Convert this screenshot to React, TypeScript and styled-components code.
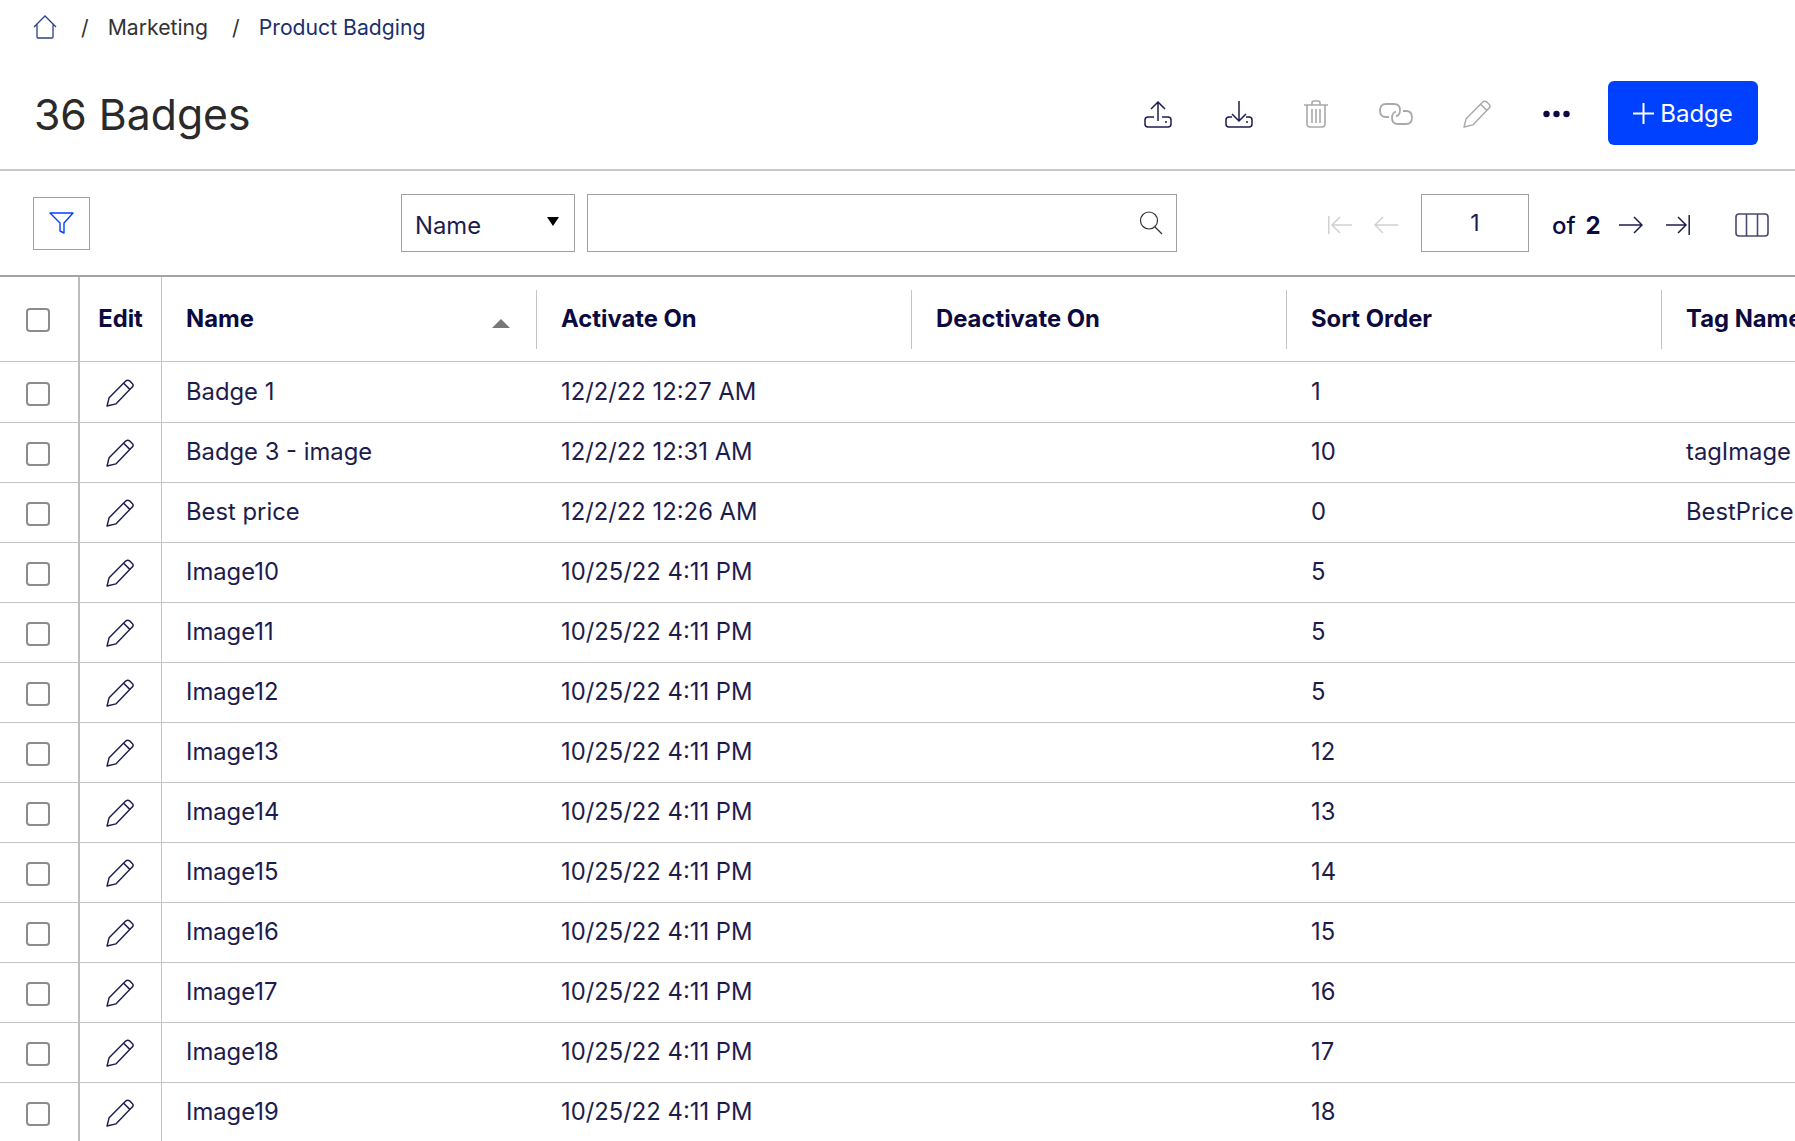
import React from "react";
import styled, { createGlobalStyle } from "styled-components";

const GlobalStyle = createGlobalStyle`
  html, body {
    margin: 0;
    padding: 0;
    background: #fff;
    overflow: hidden;
    font-family: Inter, "Liberation Sans", sans-serif;
  }
`;

const Page = styled.div`
  width: 1795px;
  height: 1141px;
  overflow: hidden;
  color: #1e1c4d;
`;

// Breadcrumb
const Crumbs = styled.nav`
  display: flex;
  align-items: center;
  height: 54px;
  padding-left: 33px;
  font-size: 21.2px;
`;

const Sep = styled.span`
  margin: 0 19px 0 24px;
  color: #333;
`;

const Crumb = styled.span<{ $current?: boolean }>`
  color: ${(p) => (p.$current ? "#1b2f6e" : "#333")};
`;

// Title bar
const TitleBar = styled.header`
  display: flex;
  align-items: center;
  justify-content: space-between;
  height: 113px;
  padding: 2px 37px 0 34px;
  border-bottom: 2px solid #c9c9c9;
`;

const Title = styled.h1`
  margin: 4px 0 0;
  font-size: 42.7px;
  font-weight: 400;
  color: #2a2a2a;
`;

const Actions = styled.div`
  display: flex;
  align-items: center;
  gap: 38px;
`;

const IconGroup = styled.div`
  display: flex;
  align-items: center;
`;

// Holds one toolbar icon; the spacing before the next one varies a little
const IconSlot = styled.span<{ $after?: number }>`
  display: flex;
  margin-top: 3px;
  margin-right: ${(p) => p.$after ?? 0}px;
`;

const PrimaryButton = styled.button`
  display: flex;
  align-items: center;
  justify-content: center;
  gap: 6px;
  width: 150px;
  height: 64px;
  padding: 2px 0 0;
  border: 0;
  border-radius: 6px;
  background: #0041ff;
  color: #fff;
  font: 400 24px Inter, sans-serif;
`;

// Search and paging toolbar
const Toolbar = styled.div`
  display: flex;
  align-items: center;
  height: 106px;
  padding: 0 0 0 33px;
  border-bottom: 2px solid #a3a3a3;
  box-sizing: border-box;
  & > * {
    flex: none;
  }
`;

const FilterBox = styled.div`
  display: flex;
  align-items: center;
  justify-content: center;
  width: 57px;
  height: 53px;
  margin-right: 311px;
  border: 1px solid #a0a0a0;
  box-sizing: border-box;
`;

const Select = styled.div`
  display: flex;
  align-items: center;
  justify-content: space-between;
  width: 174px;
  height: 58px;
  padding: 5px 15px 0 13px;
  margin-right: 12px;
  border: 1px solid #a0a0a0;
  box-sizing: border-box;
  font-size: 23.8px;
`;

const Caret = styled.span`
  width: 0;
  height: 0;
  margin-bottom: 8px;
  border-left: 6px solid transparent;
  border-right: 6px solid transparent;
  border-top: 9px solid #000;
`;

const SearchBox = styled.div`
  display: flex;
  align-items: center;
  justify-content: flex-end;
  width: 590px;
  height: 58px;
  padding-right: 12px;
  margin-right: 151px;
  border: 1px solid #a0a0a0;
  box-sizing: border-box;
`;

const Pager = styled.div`
  display: flex;
  align-items: center;
  padding-top: 4px;
`;

const PageInput = styled.div`
  display: flex;
  align-items: center;
  justify-content: center;
  width: 108px;
  height: 58px;
  margin: -4px 23px 0;
  border: 1px solid #a0a0a0;
  box-sizing: border-box;
  font-size: 23px;
`;

const PageTotal = styled.span`
  display: flex;
  gap: 10px;
  margin-right: 18px;
  font-size: 24px;
  font-weight: 500;
  color: #0c0a3e;
  b {
    font-weight: 700;
  }
`;

const ColumnsIcon = styled.svg`
  margin-left: 45px;
`;

// Table
const Row = styled.div<{ $height: number }>`
  display: flex;
  height: ${(p) => p.$height}px;
  border-bottom: 1px solid #c4c4c4;
  box-sizing: border-box;
  font-size: 23.8px;
`;

const CheckCell = styled.div<{ $head?: boolean }>`
  display: flex;
  align-items: center;
  justify-content: center;
  flex: none;
  width: 80px;
  padding: ${(p) => (p.$head ? "1px" : "3px")} 3px 0 0;
  border-right: 2px solid #bdbdbd;
  box-sizing: border-box;
`;

const Check = styled.span`
  width: 24px;
  height: 24px;
  border: 2px solid #8c8c8c;
  border-radius: 4px;
  box-sizing: border-box;
`;

const EditCell = styled.div<{ $head?: boolean }>`
  display: flex;
  align-items: center;
  justify-content: center;
  flex: none;
  width: 82px;
  padding: ${(p) => (p.$head ? "0 0 2px" : "1px 1px 0 0")};
  border-right: 1px solid #c4c4c4;
  box-sizing: border-box;
  font-weight: 700;
  color: #0c0a3e;
`;

const Cell = styled.div<{ $w: number }>`
  display: flex;
  align-items: center;
  flex: none;
  width: ${(p) => p.$w}px;
  padding: 0 0 2px 24px;
  box-sizing: border-box;
  white-space: nowrap;
`;

const HeadCell = styled(Cell)<{ $last?: boolean }>`
  justify-content: space-between;
  margin: 13px 0 12px;
  padding: 0 26px 3px 24px;
  border-right: ${(p) => (p.$last ? "0" : "1px solid #c4c4c4")};
  font-weight: 700;
  color: #0c0a3e;
`;

const SortArrow = styled.span`
  width: 0;
  height: 0;
  margin-top: 11px;
  border-left: 9px solid transparent;
  border-right: 9px solid transparent;
  border-bottom: 9px solid #777;
`;

const PagerGap = styled.span<{ $w: number }>`
  width: ${(p) => p.$w}px;
`;

const NAVY = "#1e1c4d";
const GRAY = "#a9a9a9";
const FAINT = "#d0d0d0";

const HomeIcon = () => (
  <svg width="24" height="24" viewBox="0 0 24 24" fill="none" stroke="#2b4380" strokeWidth="1.3">
    <path d="M1 12 L12 1 L23 12 M4 9.5 V22 Q4 23 5 23 H19 Q20 23 20 22 V9.5" />
  </svg>
);

const UploadIcon = () => (
  <svg width="28" height="27" viewBox="0 0 28 27" fill="none" stroke={NAVY} strokeWidth="1.5">
    <path d="M10 16 H4 Q1 16 1 19 V23 Q1 26 4 26 H24 Q27 26 27 23 V19 Q27 16 24 16 H18" />
    <path d="M14 20 V1 M7 8 L14 1 L21 8" />
    <circle cx="22" cy="21" r="1" fill={NAVY} stroke="none" />
  </svg>
);

const DownloadIcon = () => (
  <svg width="28" height="27" viewBox="0 0 28 27" fill="none" stroke={NAVY} strokeWidth="1.5">
    <path d="M7 16 H4 Q1 16 1 19 V23 Q1 26 4 26 H24 Q27 26 27 23 V19 Q27 16 24 16 H21" />
    <path d="M14 20 V0 M7 13 L14 20 L21 13" />
    <circle cx="22" cy="21" r="1" fill={NAVY} stroke="none" />
  </svg>
);

const TrashIcon = () => (
  <svg width="24" height="28" viewBox="0 0 24 28" fill="none" stroke={GRAY} strokeWidth="1.6">
    <path d="M0 5 H24 M8 5 V3 Q8 1 10 1 H14 Q16 1 16 3 V5" />
    <path d="M3 5 V24 Q3 27 6 27 H18 Q21 27 21 24 V5" />
    <path d="M8 9 V23 M12 9 V23 M16 9 V23" />
  </svg>
);

const LinkIcon = () => (
  <svg width="34" height="22" viewBox="0 0 34 22" fill="none" stroke={GRAY} strokeWidth="1.8">
    <path d="M10 14 H7 Q1 14 1 7.5 Q1 1 7 1 H15 Q21 1 21 7 Q21 12 17 13.5" />
    <path d="M24 8 H27 Q33 8 33 14.5 Q33 21 27 21 H19 Q13 21 13 15 Q13 10 17 8.5" />
  </svg>
);

const PencilIcon = ({ color = NAVY, size = 28 }: { color?: string; size?: number }) => (
  <svg width={size} height={size} viewBox="0 0 27 27" fill="none" stroke={color} strokeWidth="1.4" strokeLinejoin="round">
    <path d="M1 26 L3 18 L19 2 Q21 0.5 23 2 L25.5 4.5 Q27 6.5 25 8 L9.5 24 Z" />
    <path d="M17 4 L23 10" />
  </svg>
);

const DotsIcon = () => (
  <svg width="27" height="8" viewBox="0 0 27 8" fill="#0c0a3e">
    <circle cx="3.5" cy="4" r="3.2" />
    <circle cx="13.5" cy="4" r="3.2" />
    <circle cx="23.5" cy="4" r="3.2" />
  </svg>
);

const PlusIcon = () => (
  <svg width="21" height="21" viewBox="0 0 20 20" stroke="#fff" strokeWidth="1.9">
    <path d="M10 0 V20 M0 10 H20" />
  </svg>
);

const FilterIcon = () => (
  <svg width="25" height="22" viewBox="0 0 25 22" fill="none" stroke="#0041ff" strokeWidth="1.4" strokeLinejoin="round">
    <path d="M1 1 H24 L15 11 V21 L11 19 V11 Z" />
  </svg>
);

const SearchIcon = () => (
  <svg width="26" height="26" viewBox="0 0 26 26" fill="none" stroke="#333" strokeWidth="1.2">
    <circle cx="11" cy="10.5" r="8.5" />
    <path d="M17 17 L24 24" />
  </svg>
);

// Arrow pointing left or right, with an optional end stop
const PageArrow = ({ dir, stop, color }: { dir: "left" | "right"; stop?: boolean; color: string }) => (
  <svg width="24" height="22" viewBox="0 0 24 22" fill="none" stroke={color} strokeWidth="1.5">
    {dir === "left" ? (
      <path d={stop ? "M24 11 H4 M12 3 L4 11 L12 19 M0.8 2 V20" : "M24 11 H1 M9 3 L1 11 L9 19"} />
    ) : (
      <path d={stop ? "M0 11 H20 M12 3 L20 11 L12 19 M23.2 1 V21" : "M0 11 H23 M15 3 L23 11 L15 19"} />
    )}
  </svg>
);

const columns = [
  { label: "Activate On", width: 375 },
  { label: "Deactivate On", width: 375 },
  { label: "Sort Order", width: 375 },
  { label: "Tag Name", width: 200 },
];

const badges = [
  { name: "Badge 1", date: "12/2/22 12:27 AM", sort: "1", tag: "" },
  { name: "Badge 3 - image", date: "12/2/22 12:31 AM", sort: "10", tag: "tagImage" },
  { name: "Best price", date: "12/2/22 12:26 AM", sort: "0", tag: "BestPrice" },
  { name: "Image10", date: "10/25/22 4:11 PM", sort: "5", tag: "" },
  { name: "Image11", date: "10/25/22 4:11 PM", sort: "5", tag: "" },
  { name: "Image12", date: "10/25/22 4:11 PM", sort: "5", tag: "" },
  { name: "Image13", date: "10/25/22 4:11 PM", sort: "12", tag: "" },
  { name: "Image14", date: "10/25/22 4:11 PM", sort: "13", tag: "" },
  { name: "Image15", date: "10/25/22 4:11 PM", sort: "14", tag: "" },
  { name: "Image16", date: "10/25/22 4:11 PM", sort: "15", tag: "" },
  { name: "Image17", date: "10/25/22 4:11 PM", sort: "16", tag: "" },
  { name: "Image18", date: "10/25/22 4:11 PM", sort: "17", tag: "" },
  { name: "Image19", date: "10/25/22 4:11 PM", sort: "18", tag: "" },
];

const App: React.FC = () => (
  <Page>
    <GlobalStyle />
    <Crumbs>
      <HomeIcon />
      <Sep>/</Sep>
      <Crumb>Marketing</Crumb>
      <Sep>/</Sep>
      <Crumb $current>Product Badging</Crumb>
    </Crumbs>

    <TitleBar>
      <Title>36 Badges</Title>
      <Actions>
        <IconGroup>
          <IconSlot $after={53}>
            <UploadIcon />
          </IconSlot>
          <IconSlot $after={51}>
            <DownloadIcon />
          </IconSlot>
          <IconSlot $after={51}>
            <TrashIcon />
          </IconSlot>
          <IconSlot $after={50}>
            <LinkIcon />
          </IconSlot>
          <IconSlot $after={52}>
            <PencilIcon color={GRAY} />
          </IconSlot>
          <IconSlot>
            <DotsIcon />
          </IconSlot>
        </IconGroup>
        <PrimaryButton>
          <PlusIcon />
          Badge
        </PrimaryButton>
      </Actions>
    </TitleBar>

    <Toolbar>
      <FilterBox>
        <FilterIcon />
      </FilterBox>
      <Select>
        Name
        <Caret />
      </Select>
      <SearchBox>
        <SearchIcon />
      </SearchBox>
      <Pager>
        <PageArrow dir="left" stop color={FAINT} />
        <PagerGap $w={22} />
        <PageArrow dir="left" color={FAINT} />
        <PageInput>1</PageInput>
        <PageTotal>
          of <b>2</b>
        </PageTotal>
        <PageArrow dir="right" color={NAVY} />
        <PagerGap $w={23} />
        <PageArrow dir="right" stop color={NAVY} />
        <ColumnsIcon width="34" height="24" viewBox="0 0 34 24" fill="none" stroke="#4a4875" strokeWidth="1.6">
          <rect x="1" y="1" width="32" height="22" rx="3" />
          <path d="M11.5 1 V23 M22.5 1 V23" />
        </ColumnsIcon>
      </Pager>
    </Toolbar>

    <Row $height={85}>
      <CheckCell $head>
        <Check />
      </CheckCell>
      <EditCell $head>Edit</EditCell>
      <HeadCell $w={375}>
        Name
        <SortArrow />
      </HeadCell>
      {columns.map((c, i) => (
        <HeadCell key={c.label} $w={c.width} $last={i === columns.length - 1}>
          {c.label}
        </HeadCell>
      ))}
    </Row>

    {badges.map((b, i) => (
      <Row key={b.name} $height={i === 0 ? 61 : 60}>
        <CheckCell>
          <Check />
        </CheckCell>
        <EditCell>
          <PencilIcon />
        </EditCell>
        <Cell $w={375}>{b.name}</Cell>
        <Cell $w={375}>{b.date}</Cell>
        <Cell $w={375} />
        <Cell $w={375}>{b.sort}</Cell>
        <Cell $w={200}>{b.tag}</Cell>
      </Row>
    ))}
  </Page>
);

export default App;
